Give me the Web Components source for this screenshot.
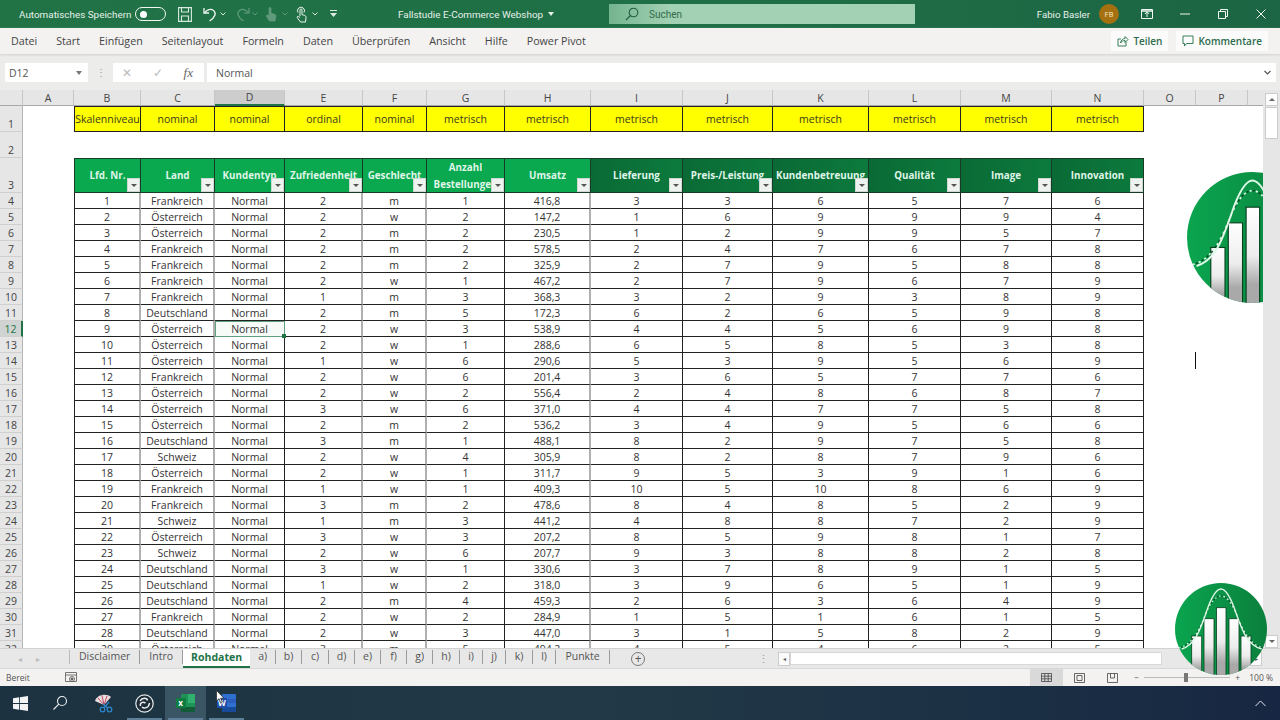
<!DOCTYPE html>
<html lang="de">
<head>
<meta charset="utf-8">
<title>Fallstudie E-Commerce Webshop</title>
<style>
html, body { margin: 0; height: 720px; overflow: hidden; background: #fff; font-family: "Open Sans", "Liberation Sans", sans-serif; }
</style>
</head>
<body>
<excel-window></excel-window>
<script>
function chev(color) {
    return `<svg width="6" height="4" viewBox="0 0 6 4" fill="none" stroke="${color}" stroke-width="1"><path d="M.5.500L3 3 5.500.5"/></svg>`;
}
var ICON = {
    save: '<svg width="14" height="15" viewBox="0 0 14 15" fill="none" stroke="#d9ebe0" stroke-width="1.1"><path d="M.6.600h12.800v13.800H.6z"/><path d="M3.500.6v4.400h7V.6M3.500 14.400V9h7v5.400"/></svg>',
    undo: '<svg width="14" height="15" viewBox="0 0 14 15" fill="none" stroke="#eef6f1" stroke-width="1.3"><path d="M1 1v5h5"/><path d="M1.500 6C4 2.500 8 1.500 10.500 3.500c3 2.500 2 6.500-4 10.500"/></svg>',
    redo: '<svg width="14" height="15" viewBox="0 0 14 15" fill="none" stroke="#5f9a7c" stroke-width="1.2"><path d="M13 1v5H8"/><path d="M12.500 6C10 2.500 6 1.500 3.500 3.500c-3 2.500-2 6.500 4 10.500"/></svg>',
    touchDim: '<svg width="14" height="16" viewBox="0 0 14 16" fill="#5f9a7c" stroke="#5f9a7c" stroke-width=".8"><path d="M5 8V2.500a1 1 0 0 1 2 0V7l4 1.500c1 .5 1 1.500.8 2.500L11 15H5.500L2.500 10.500c-.4-1 .6-2 1.500-1.300L5 10z"/></svg>',
    touch: '<svg width="11" height="17" viewBox="0 0 11 17" fill="none" stroke="#eef6f1" stroke-width="1"><path d="M2 6.500a3.500 3.500 0 1 1 6 0"/><path d="M4 10V4a1 1 0 0 1 2 0V8.500l2.800 1c1 .4 1.400 1.200 1.200 2.200L9.500 16h-5L1.300 11.800c-.5-1 .5-2 1.400-1.300L4 11.500"/></svg>',
    search: '<svg width="14" height="14" viewBox="0 0 14 14" fill="none" stroke="#1d5f3f" stroke-width="1.100"><circle cx="8.500" cy="5.500" r="4.300"/><path d="M5.500 8.500L1 13"/></svg>',
    share: '<svg width="12" height="12" viewBox="0 0 12 12" fill="none" stroke="#217346" stroke-width=".9"><path d="M9 6.500V11H1V4h3"/><path d="M3.500 8C4 5 6 3.500 8 3.500V1.500L11 4.500 8 7.500V5.500C6 5.500 4.500 6.500 3.500 8z"/></svg>',
    comment: '<svg width="12" height="12" viewBox="0 0 12 12" fill="none" stroke="#217346" stroke-width=".9"><path d="M1 1h10v7.500H4.500L2.500 11V8.500H1z"/></svg>'
};

class TitleBar extends HTMLElement {
    constructor() {
        super();
        this.attachShadow({ mode: "open" });
        this.shadowRoot.innerHTML = `
            <style>
                :host { display: flex; align-items: center; height: 28px; background: linear-gradient(90deg, #217346, #1f6e46 60%, #1c6544); color: #e6f1ea; font-family: Roboto, sans-serif; font-size: 9.900px; flex: none; }
                .left { display: flex; align-items: center; width: 609px; flex: none; padding-left: 19px; box-sizing: border-box; }
                .auto { width: 116px; flex: none; white-space: nowrap; }
                .toggle { width: 31px; height: 14px; border: 1px solid #f2f7f4; border-radius: 8px; box-sizing: border-box; display: flex; align-items: center; padding-left: 4px; flex: none; }
                .toggle i { width: 7px; height: 7px; border-radius: 50%; background: #fff; }
                .qa { display: flex; align-items: center; margin-left: 12px; flex: none; }
                .qa > svg { flex: none; }
                .name { margin-left: 61px; white-space: nowrap; display: flex; align-items: center; gap: 5px; }
                .search { width: 306px; height: 20px; background: linear-gradient(90deg, #74b48f, #a3d1b3 20%); display: flex; align-items: center; gap: 10px; padding-left: 16px; box-sizing: border-box; color: #2f6b4c; font-size: 10px; flex: none; }
                .right { margin-left: auto; display: flex; align-items: center; }
                .user { margin-right: 9px; font-size: 9.700px; }
                .avatar { width: 20px; height: 20px; border-radius: 50%; background: #a5700f; color: #f1e0b8; font-size: 7.500px; display: flex; align-items: center; justify-content: center; margin-right: 9px; }
                .win { width: 38px; display: flex; justify-content: center; }
            </style>
            <div class="left">
                <span class="auto">Automatisches Speichern</span>
                <span class="toggle"><i></i></span>
                <div class="qa">
                    ${ICON.save}<span style="width:11px"></span>
                    ${ICON.undo}<span style="width:3px"></span>${chev("#dbe9e1")}<span style="width:10px"></span>
                    ${ICON.redo}<span style="width:2px"></span>${chev("#5f9a7c")}<span style="width:6px"></span>
                    ${ICON.touchDim}<span style="width:4px"></span>${chev("#5f9a7c")}<span style="width:8px"></span>
                    ${ICON.touch}<span style="width:5px"></span>${chev("#dbe9e1")}<span style="width:12px"></span>
                    <svg width="7" height="8" viewBox="0 0 7 8" fill="#dbe9e1"><path d="M0 0h7v1H0zM0 3h7L3.500 7z"/></svg>
                </div>
                <span class="name">Fallstudie E-Commerce Webshop <svg width="6" height="4" viewBox="0 0 6 4" fill="#e6f1ea"><path d="M0 0h6L3 4z"/></svg></span>
            </div>
            <div class="search">${ICON.search}<span>Suchen</span></div>
            <div class="right">
                <span class="user">Fabio Basler</span>
                <span class="avatar">FB</span>
                <span class="win"><svg width="12" height="10" viewBox="0 0 12 10" fill="none" stroke="#f0f6f2"><path d="M.5.500h11v9H.5z"/><path d="M6 8V3M3.800 5L6 2.800 8.200 5"/><path d="M.5 2h11" stroke-width="1.500"/></svg></span>
                <span class="win"><svg width="10" height="2" viewBox="0 0 10 2" stroke="#f0f6f2"><path d="M0 1h10"/></svg></span>
                <span class="win"><svg width="10" height="10" viewBox="0 0 10 10" fill="none" stroke="#f0f6f2"><path d="M.5 2.500h7v7h-7zM2.500 2.500v-2h7v7h-2"/></svg></span>
                <span class="win"><svg width="10" height="10" viewBox="0 0 10 10" stroke="#f0f6f2"><path d="M.5.500l9 9M9.500.500l-9 9"/></svg></span>
            </div>
        `;
    }
}
customElements.define("title-bar", TitleBar);

class MenuBar extends HTMLElement {
    constructor() {
        super();
        this.attachShadow({ mode: "open" });
        var items = ["Datei", "Start", "Einfügen", "Seitenlayout", "Formeln", "Daten", "Überprüfen", "Ansicht", "Hilfe", "Power Pivot"];
        this.shadowRoot.innerHTML = `
            <style>
                :host { display: flex; align-items: center; height: 26px; background: #f3f2f1; color: #444; font-size: 10.700px; padding-left: 11px; box-sizing: border-box; flex: none; box-shadow: 0 1px 2px #cfcfcf; position: relative; }
                .items { display: flex; gap: 19px; }
                .btns { margin-left: auto; display: flex; gap: 8px; margin-right: 12px; }
                .btn { background: #fbfbfb; height: 20px; display: flex; align-items: center; gap: 4px; padding: 0 6px; color: #2c6b4c; font-size: 10px; font-weight: 600; }
            </style>
            <div class="items">${items.map(i => `<span>${i}</span>`).join("")}</div>
            <div class="btns">
                <span class="btn">${ICON.share}Teilen</span>
                <span class="btn">${ICON.comment}Kommentare</span>
            </div>
        `;
    }
}
customElements.define("menu-bar", MenuBar);

class FormulaBar extends HTMLElement {
    constructor() {
        super();
        this.attachShadow({ mode: "open" });
        this.shadowRoot.innerHTML = `
            <style>
                :host { display: flex; align-items: flex-start; height: 36px; background: #ececeb; color: #444; font-size: 10.500px; flex: none; padding: 9px 4px 0 5px; box-sizing: border-box; }
                .box { background: #fff; height: 19px; display: flex; align-items: center; box-sizing: border-box; }
                .name { width: 83px; padding: 0 6px 0 4px; justify-content: space-between; color: #555; }
                .dots { width: 25px; text-align: center; color: #999; font-size: 10px; line-height: 19px; }
                .fx { width: 91px; justify-content: space-between; padding: 0 11px 0 9px; margin-right: 3px; color: #bbb; font-size: 12px; }
                .fx i { color: #666; font-family: "Liberation Serif", serif; font-size: 13px; }
                .val { flex: 1; padding: 0 5px 0 9px; justify-content: space-between; color: #555; }
            </style>
            <div class="box name"><span>D12</span><svg width="6" height="4" viewBox="0 0 6 4" fill="#777"><path d="M0 0h6L3 4z"/></svg></div>
            <div class="dots">⋮</div>
            <div class="box fx"><span>✕</span><span>✓</span><i>fx</i></div>
            <div class="box val"><span>Normal</span><svg width="7" height="5" viewBox="0 0 7 5" fill="none" stroke="#555" stroke-width="1.200"><path d="M.5 1L3.500 4l3-3"/></svg></div>
        `;
    }
}
customElements.define("formula-bar", FormulaBar);

var COLS = [
    ["A", 51], ["B", 67], ["C", 74], ["D", 70], ["E", 78], ["F", 64], ["G", 78], ["H", 86],
    ["I", 92], ["J", 90], ["K", 96], ["L", 92], ["M", 91], ["N", 92], ["O", 52], ["P", 52], ["", 32]
];
var SCALE = ["Skalenniveau", "nominal", "nominal", "ordinal", "nominal", "metrisch", "metrisch", "metrisch", "metrisch", "metrisch", "metrisch", "metrisch", "metrisch"];
var HEADS = ["Lfd. Nr.", "Land", "Kundentyp", "Zufriedenheit", "Geschlecht", "Anzahl Bestellungen", "Umsatz", "Lieferung", "Preis-/Leistung", "Kundenbetreuung", "Qualität", "Image", "Innovation"];
var THICK = [0, 1, 3, 4, 6];
var RAW = `1 Frankreich 2 m 1 416,8 3 3 6 5 7 6
2 Österreich 2 w 2 147,2 1 6 9 9 9 4
3 Österreich 2 m 2 230,5 1 2 9 9 5 7
4 Frankreich 2 m 2 578,5 2 4 7 6 7 8
5 Frankreich 2 m 2 325,9 2 7 9 5 8 8
6 Frankreich 2 w 1 467,2 2 7 9 6 7 9
7 Frankreich 1 m 3 368,3 3 2 9 3 8 9
8 Deutschland 2 m 5 172,3 6 2 6 5 9 8
9 Österreich 2 w 3 538,9 4 4 5 6 9 8
10 Österreich 2 w 1 288,6 6 5 8 5 3 8
11 Österreich 1 w 6 290,6 5 3 9 5 6 9
12 Frankreich 2 w 6 201,4 3 6 5 7 7 6
13 Österreich 2 w 2 556,4 2 4 8 6 8 7
14 Österreich 3 w 6 371,0 4 4 7 7 5 8
15 Österreich 2 m 2 536,2 3 4 9 5 6 6
16 Deutschland 3 m 1 488,1 8 2 9 7 5 8
17 Schweiz 2 w 4 305,9 8 2 8 7 9 6
18 Österreich 2 w 1 311,7 9 5 3 9 1 6
19 Frankreich 1 w 1 409,3 10 5 10 8 6 9
20 Frankreich 3 m 2 478,6 8 4 8 5 2 9
21 Schweiz 1 m 3 441,2 4 8 8 7 2 9
22 Österreich 3 w 3 207,2 8 5 9 8 1 7
23 Schweiz 2 w 6 207,7 9 3 8 8 2 8
24 Deutschland 3 w 1 330,6 3 7 8 9 1 5
25 Deutschland 1 w 2 318,0 3 9 6 5 1 9
26 Deutschland 2 m 4 459,3 2 6 3 6 4 9
27 Frankreich 2 w 2 284,9 1 5 1 6 1 5
28 Deutschland 2 w 3 447,0 3 1 5 8 2 9
29 Österreich 3 m 5 494,2 4 5 4 6 2 5`;

class SheetGrid extends HTMLElement {
    constructor() {
        super();
        this.attachShadow({ mode: "open" });
        var rows = RAW.split("\n").map(r => r.split(" "));
        var html = `<div class="corner"></div>`;
        COLS.forEach(c => {
            html += `<div class="colhead ${c[0] == "D" ? "sel" : ""}">${c[0]}</div>`;
        });
        // row 1, the scale levels
        html += `<div class="rowhead low">1</div><div></div>`;
        SCALE.forEach((s, i) => { html += `<div class="scale ${i == 0 ? "first" : ""}">${s}</div>`; });
        html += `<div class="rest"></div>`;
        // row 2 stays empty
        html += `<div class="rowhead low">2</div><div style="grid-column:span 17"></div>`;
        // row 3, the table head
        html += `<div class="rowhead low">3</div><div></div>`;
        HEADS.forEach((h, i) => {
            var cls = i < 7 ? "head" : "head dark";
            if (i == 0) cls += " first";
            html += `<div class="${cls}"><span>${h}</span><b class="filter"></b></div>`;
        });
        html += `<div class="rest"></div>`;
        rows.forEach((r, i) => {
            var n = i + 4;
            html += `<div class="rowhead ${n == 12 ? "sel" : ""}">${n}</div><div></div>`;
            var vals = [r[0], r[1], "Normal"].concat(r.slice(2));
            vals.forEach((v, j) => {
                var cls = "cell";
                if (j == 0) cls += " first";
                if (THICK.includes(j)) cls += " thick";
                if (n == 12 && j == 2) cls += " active";
                html += `<div class="${cls}">${v}</div>`;
            });
            html += `<div class="rest"></div>`;
        });
        this.shadowRoot.innerHTML = `
            <style>
                :host { display: block; flex: 1; min-height: 0; overflow: hidden; position: relative; background: #fff; }
                .grid { display: grid; grid-template-columns: 23px ${COLS.map(c => c[1] + "px").join(" ")}; grid-template-rows: 16px 26px 26px 35px; grid-auto-rows: 16px; font-size: 10.500px; color: #333; width: 1280px; }
                .grid > div { box-sizing: border-box; min-width: 0; }
                .rest { grid-column: span 3; }
                .corner { background: #e6e6e6; border-right: 1px solid #c6c6c6; border-bottom: 1px solid #a8a8a8; }
                .colhead { background: #e6e6e6; border-right: 1px solid #c6c6c6; border-bottom: 1px solid #a8a8a8; color: #444; display: flex; align-items: center; justify-content: center; }
                .colhead.sel { background: #cdcdcd; border-bottom: 2px solid #217346; }
                .rowhead { background: #e6e6e6; border-right: 1px solid #b5b5b5; border-bottom: 1px solid #cfcfcf; color: #444; display: flex; align-items: center; justify-content: center; }
                .rowhead.low { align-items: flex-end; }
                .rowhead.sel { background: #cfd3d1; border-right: 2px solid #217346; color: #217346; }
                .scale { background: #ffff00; border: 1px solid #222; border-left: 0; display: flex; align-items: center; justify-content: center; color: #3a3a20; white-space: nowrap; overflow: hidden; }
                .scale.first { border-left: 1px solid #222; }
                .head { background: #0aa94f; color: #dff5e8; font-weight: 700; font-size: 9.800px; border: 1px solid #1a3a28; border-left: 0; display: flex; align-items: center; justify-content: center; text-align: center; line-height: 17px; position: relative; overflow: hidden; white-space: normal; }
                .head.first { border-left: 1px solid #1a3a28; }
                .head.dark { background: linear-gradient(90deg, #0a6a35, #0c7a3d); }
                .head span { display: block; }
                .filter { position: absolute; right: 0; bottom: 0; width: 13px; height: 14px; background: #eef3ef; border: 1px solid #cfd8d3; box-sizing: border-box; }
                .filter::after { content: ""; position: absolute; left: 2.5px; top: 5px; border: 3px solid transparent; border-top: 3px solid #555; border-bottom: 0; }
                .cell { border-right: 1px solid #222; border-bottom: 1px solid #222; display: flex; align-items: center; justify-content: center; color: #333; white-space: nowrap; background: #fff; }
                .cell.first { border-left: 1px solid #222; }
                .cell.thick { border-right: 2px solid #b0b0b0; }
                .cell.active { outline: 1px solid #5f9f80; outline-offset: -1px; background: #f6fbf8; position: relative; }
                .active::after { content: ""; position: absolute; right: -2px; bottom: -2px; width: 4px; height: 4px; background: #217346; }
            </style>
            <div class="grid">${html}</div>
            <slot></slot>
        `;
    }
}
customElements.define("sheet-grid", SheetGrid);

class ScrollBar extends HTMLElement {
    constructor() {
        super();
        this.attachShadow({ mode: "open" });
        this.shadowRoot.innerHTML = `
            <style>
                :host { position: absolute; right: 0; top: 0; bottom: 0; width: 17px; background: #e6e6e6; display: flex; flex-direction: column; align-items: center; box-sizing: border-box; padding-top: 3px; }
                .arrow { width: 13px; height: 13px; background: #fdfdfd; border: 1px solid #ccc; box-sizing: border-box; flex: none; position: relative; }
                .arrow::after { content: ""; position: absolute; left: 2.5px; top: 3.5px; border: 3px solid transparent; border-bottom: 3px solid #666; border-top: 0; }
                .arrow.down::after { border-top: 3px solid #666; border-bottom: 0; top: 4px; }
                .thumb { width: 13px; height: 32px; background: #fff; border: 1px solid #ccc; box-sizing: border-box; margin-top: 1px; }
                .arrow.down { margin-top: auto; margin-bottom: 0; }
            </style>
            <div class="arrow"></div>
            <div class="thumb"></div>
            <div class="arrow down"></div>
        `;
    }
}
customElements.define("v-scroll", ScrollBar);

// the logo that lies over the sheet: a curve over columns in a green disc
class LogoDisc extends HTMLElement {
    constructor() {
        super();
        this.attachShadow({ mode: "open" });
        var id = "g" + this.getAttribute("name");
        this.shadowRoot.innerHTML = `
            <style>:host { display: block; position: absolute; left: ${this.getAttribute("x")}px; top: ${this.getAttribute("y")}px; width: ${this.getAttribute("size")}px; height: ${this.getAttribute("size")}px; }</style>
            <svg width="100%" height="100%" viewBox="0 0 92 92" style="display:block">
                <defs>
                    <linearGradient id="${id}" x1="0" x2="1" y1="0" y2="0"><stop offset="0" stop-color="#0aa54f"/><stop offset="1" stop-color="#0b7f3c"/></linearGradient>
                    <linearGradient id="${id}b" x1="0" x2="0" y1="0" y2="1"><stop offset="0" stop-color="#fff"/><stop offset=".5" stop-color="#ededed"/><stop offset=".8" stop-color="#a9a9a9"/></linearGradient>
                    <clipPath id="${id}c"><circle cx="46" cy="46" r="46"/></clipPath>
                </defs>
                <circle cx="46" cy="46" r="46" fill="url(#${id})"/>
                <g clip-path="url(#${id}c)">
                    <g fill="url(#${id}b)" stroke="#06401f" stroke-width=".8">
                        <rect x="16.700" y="53" width="10" height="40"/>
                        <rect x="29" y="35.700" width="10" height="57"/>
                        <rect x="41.500" y="24.700" width="9.500" height="68"/>
                        <rect x="54" y="35.700" width="10" height="57"/>
                        <rect x="66" y="53" width="10" height="40"/>
                    </g>
                    <path d="M4 65C16 62 23 50 29 35C35 19 41 13 46 13C51 13 57 19 63 35C69 50 76 62 88 65" fill="none" stroke="#dff7e6" stroke-width="1.200" stroke-dasharray="1.500 3"/>
                    <path d="M4 65C16 62 23 50 29 35C35 19 41 13 46 13C51 13 57 19 63 35C69 50 76 62 88 65" fill="none" stroke="#064a25" stroke-width="1.200" stroke-dasharray="1.500 3" stroke-dashoffset="2.250"/>
                    <path d="M6.700 66C20 62 25 47 31 30C37 12 42 6 46 6C50 6 55 12 61 30C67 47 72 62 86.700 66" fill="none" stroke="#dff7e6" stroke-width="1.400"/>
                </g>
            </svg>
        `;
    }
}
customElements.define("logo-disc", LogoDisc);

class SheetTabs extends HTMLElement {
    constructor() {
        super();
        this.attachShadow({ mode: "open" });
        // the small tabs are not all of one width
        var tabs = [["a)", 26], ["b)", 26], ["c)", 27], ["d)", 26], ["e)", 26], ["f)", 26], ["g)", 26], ["h)", 27], ["i)", 23], ["j)", 23], ["k)", 27], ["l)", 23]];
        this.shadowRoot.innerHTML = `
            <style>
                :host { display: flex; align-items: center; height: 20px; background: #e8e8e8; color: #555; font-size: 10.500px; flex: none; box-sizing: border-box; border-top: 1px solid #d2d2d2; }
                .nav { width: 69px; flex: none; display: flex; gap: 14px; padding-left: 18px; box-sizing: border-box; color: #bbb; font-size: 8px; }
                .tab { height: 14px; line-height: 13px; border-right: 1px solid #9a9a9a; flex: none; margin-top: -3px; box-sizing: border-box; text-align: center; }
                .tab.first { border-left: 1px solid #bbb; padding: 0 9px; box-sizing: content-box; }
                .tab.intro { padding: 0 9px; box-sizing: content-box; }
                .tab.on { background: #fff; color: #217346; font-weight: 700; height: 19px; line-height: 17px; border: 0; border-bottom: 2px solid #217346; margin-top: -1px; width: 67px; }
                .plus { width: 14px; height: 14px; border: 1px solid #777; border-radius: 50%; margin-left: 21px; color: #555; display: flex; align-items: center; justify-content: center; font-size: 12px; box-sizing: border-box; line-height: 1; flex: none; }
                .hs { margin-left: auto; display: flex; align-items: center; margin-right: 18px; }
                .hs .dots { color: #999; margin-right: 9px; }
                .hs .a { width: 12px; height: 14px; background: #fbfbfb; border: 1px solid #ccc; box-sizing: border-box; font-size: 6px; display: flex; align-items: center; justify-content: center; color: #555; }
                .hs .t { width: 372px; height: 13px; background: #fff; border: 1px solid #d8d8d8; box-sizing: border-box; }
                .hs .r { width: 88px; }
            </style>
            <div class="nav"><span>◂</span><span>▸</span></div>
            <span class="tab first">Disclaimer</span>
            <span class="tab intro">Intro</span>
            <span class="tab on">Rohdaten</span>
            ${tabs.map(t => `<span class="tab" style="width:${t[1]}px">${t[0]}</span>`).join("")}
            <span class="tab" style="width:54px">Punkte</span>
            <span class="plus">+</span>
            <div class="hs"><span class="dots">⋮</span><span class="a">◂</span><span class="t"></span><span class="r"></span><span class="a">▸</span></div>
        `;
    }
}
customElements.define("sheet-tabs", SheetTabs);

class StatusBar extends HTMLElement {
    constructor() {
        super();
        this.attachShadow({ mode: "open" });
        this.shadowRoot.innerHTML = `
            <style>
                :host { display: flex; align-items: center; height: 18px; background: #f3f2f1; color: #555; font-size: 8.500px; padding-left: 6px; box-sizing: border-box; flex: none; border-top: 1px solid #d8d8d8; }
                .rec { margin-left: 35px; display: flex; }
                .views { margin-left: auto; display: flex; align-items: center; height: 100%; }
                .v { width: 33px; height: 100%; display: flex; align-items: center; justify-content: center; }
                .v.on { background: #d9d9d9; }
                .zoom { display: flex; align-items: center; margin-left: 5px; width: 106px; gap: 5px; }
                .line { flex: 1; height: 1px; background: #bbb; position: relative; }
                .line i { position: absolute; left: 40px; top: -4px; width: 4px; height: 9px; background: #777; }
                .pct { margin: 0 7px 0 9px; }
            </style>
            <span>Bereit</span>
            <span class="rec"><svg width="12" height="11" viewBox="0 0 12 11" fill="none" stroke="#555" stroke-width=".8"><path d="M.5.500h11v9H.5zM.5 3h11"/><circle cx="7" cy="7" r="2.500"/><circle cx="7" cy="7" r="1" fill="#555"/></svg></span>
            <div class="views">
                <span class="v on"><svg width="11" height="9" viewBox="0 0 11 9" fill="none" stroke="#444" stroke-width=".8"><path d="M.5.500h10v8H.5zM.5 3.200h10M.5 5.800h10M3.800.5v8M7.200.5v8"/></svg></span>
                <span class="v"><svg width="11" height="10" viewBox="0 0 11 10" fill="none" stroke="#444" stroke-width=".8"><path d="M.5.500h10v9H.5zM3 2.500h5v5H3z"/></svg></span>
                <span class="v"><svg width="11" height="10" viewBox="0 0 11 10" fill="none" stroke="#444" stroke-width=".8"><path d="M.5.500h10v9H.5zM3.500.5v4.500h4V.5"/></svg></span>
                <div class="zoom"><span>−</span><span class="line"><i></i></span><span>+</span></div>
                <span class="pct">100 %</span>
            </div>
        `;
    }
}
customElements.define("status-bar", StatusBar);

class TaskBar extends HTMLElement {
    constructor() {
        super();
        this.attachShadow({ mode: "open" });
        this.shadowRoot.innerHTML = `
            <style>
                :host { display: flex; align-items: center; height: 34px; background: linear-gradient(90deg, #1c3240, #223a47 45%, #1b2f44 80%, #172642); flex: none; position: relative; }
                .slot { width: 41px; height: 100%; display: flex; align-items: center; justify-content: center; position: relative; flex: none; }
                .slot.open::after { content: ""; position: absolute; left: 3px; right: 3px; bottom: 0; height: 2px; background: #5d7f97; }
                .slot.active { background: #3a5563; }
                .up { margin-left: auto; margin-right: 14px; display: flex; }
            </style>
            <span class="slot" style="width:40px"><svg width="15" height="15" viewBox="0 0 15 15" fill="#f1f3f5"><path d="M0 2.200L6.200 1.300V7H0zM7 1.200L15 0V7H7zM0 8H6.200V13.700L0 12.800zM7 8H15V15L7 13.800z"/></svg></span>
            <span class="slot" style="width:40px"><svg width="16" height="16" viewBox="0 0 16 16" fill="none" stroke="#eef1f3" stroke-width="1.100"><circle cx="10" cy="6" r="4.500"/><path d="M6.800 9.200L1.500 14.500"/></svg></span>
            <span class="slot" style="margin-left:3px;width:41px"><svg width="20" height="20" viewBox="0 0 20 20"><path d="M1 8C3 1 13 0 17 4L10 12z" fill="#e9dcdc"/><path d="M4 5L10 12M8 2.500L10 12M13 3L10 12" stroke="#c0496a" stroke-width="1"/><path d="M9 11l5 4M15 9l-5 6" stroke="#2e86c9" stroke-width="1.300"/><circle cx="15.500" cy="16.500" r="2.300" fill="none" stroke="#2e86c9" stroke-width="1.300"/><circle cx="8.500" cy="16.500" r="2.300" fill="none" stroke="#2e86c9" stroke-width="1.300"/></svg></span>
            <span class="slot open"><svg width="19" height="19" viewBox="0 0 19 19"><circle cx="9.500" cy="9.500" r="8.700" fill="#1d2c36" stroke="#e8ecef" stroke-width="1.200"/><path d="M5 7C7 3.500 12 3.500 12.500 6.500M14.500 9C14 14 9 15 7 13M5.500 12C4.500 8.500 8 7.500 10.500 9" fill="none" stroke="#e8ecef" stroke-width="1.500"/></svg></span>
            <span class="slot open active"><svg width="19" height="18" viewBox="0 0 19 18"><rect x="5" y="0" width="14" height="18" rx="1" fill="#1f9256"/><rect x="12" y="0" width="7" height="9" fill="#2fb06c"/><rect x="5" y="13" width="14" height="5" fill="#135c37"/><rect x="0" y="4" width="10" height="10" fill="#107c41"/><text x="2.300" y="12" font-size="8" font-weight="700" fill="#fff" font-family="Open Sans">x</text></svg></span>
            <span class="slot open"><svg width="19" height="18" viewBox="0 0 19 18"><rect x="5" y="0" width="14" height="18" rx="1" fill="#2f6fd0"/><rect x="5" y="5" width="14" height="4" fill="#2b5fbd"/><rect x="5" y="13" width="14" height="5" fill="#184a9a"/><rect x="0" y="4" width="10" height="10" fill="#1f4ea8"/><text x="1" y="12" font-size="8" font-weight="700" fill="#fff" font-family="Open Sans">W</text></svg></span>
            <span class="up"><svg width="11" height="7" viewBox="0 0 11 7" fill="none" stroke="#dfe5ea"><path d="M.5 6L5.500 1l5 5"/></svg></span>
        `;
    }
}
customElements.define("task-bar", TaskBar);

class ExcelWindow extends HTMLElement {
    constructor() {
        super();
        this.attachShadow({ mode: "open" });
        this.shadowRoot.innerHTML = `
            <style>
                :host { display: flex; flex-direction: column; width: 1280px; height: 720px; overflow: hidden; position: relative; }
                .mouse { position: absolute; left: 216px; top: 690px; }
                .caret { position: absolute; left: 1195px; top: 352px; width: 1px; height: 17px; background: #111; }
            </style>
            <title-bar></title-bar>
            <menu-bar></menu-bar>
            <formula-bar></formula-bar>
            <sheet-grid>
                <logo-disc name="a" x="1187" y="82" size="131"></logo-disc>
                <v-scroll></v-scroll>
            </sheet-grid>
            <sheet-tabs></sheet-tabs>
            <status-bar></status-bar>
            <task-bar></task-bar>
            <logo-disc name="b" x="1175" y="583" size="92"></logo-disc>
            <div class="caret"></div>
            <svg class="mouse" width="9" height="14" viewBox="0 0 9 14"><path d="M.5.500V11l2.500-2.300 1.700 4 1.600-.7-1.700-3.800H8z" fill="#fff" stroke="#222" stroke-width=".7"/></svg>
        `;
    }
}
customElements.define("excel-window", ExcelWindow);
</script>
</body>
</html>
